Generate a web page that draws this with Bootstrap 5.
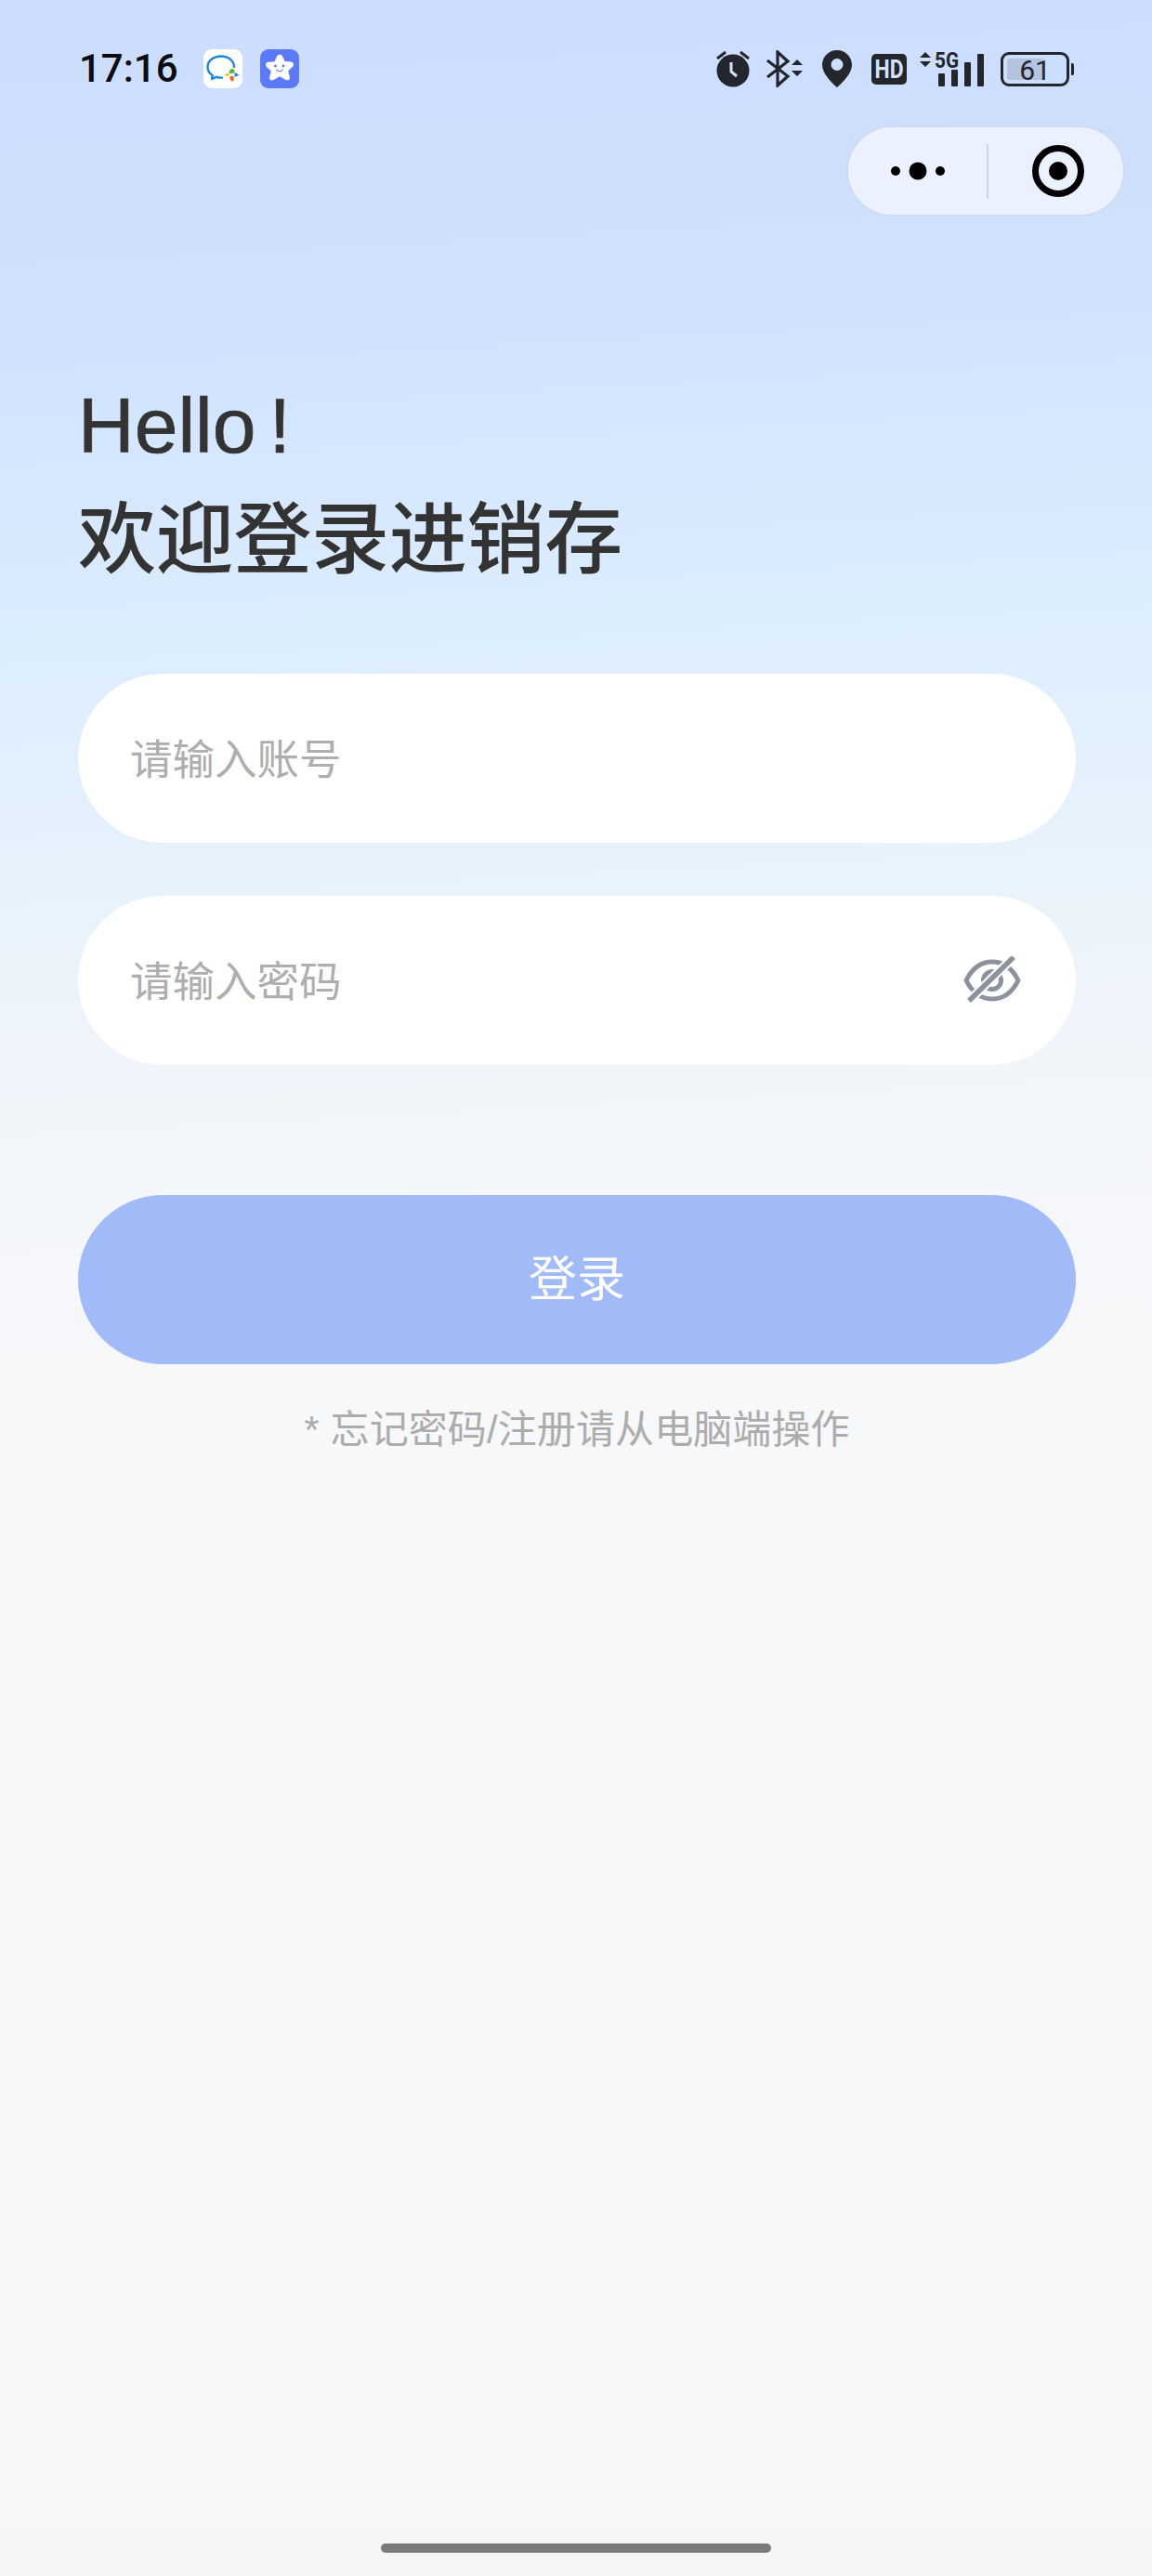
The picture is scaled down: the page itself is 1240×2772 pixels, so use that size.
<!DOCTYPE html>
<html lang="zh-CN">
<head>
  <meta charset="UTF-8">
  <meta name="viewport" content="width=device-width, initial-scale=1.0">
  <title>登录</title>
  <link href="https://cdn.jsdelivr.net/npm/bootstrap@5.3.2/dist/css/bootstrap.min.css" rel="stylesheet">
  <style>
    html, body { height: 100%; }
    body {
      min-height: 2772px;
      background: linear-gradient(177deg, #cbdcfe 0, #d0e1fe 350px, #dcedfe 700px, #e9f3fb 1000px, #f3f6fa 1250px, #f7f8fa 1500px);
      font-family: "Liberation Sans", "Noto Sans CJK SC", sans-serif;
    }
    .status-row { height: 42px; margin-top: 53px; padding: 0 84px 0 85px; }
    .status-time { font: 500 42px/42px Roboto, sans-serif; color: #0b0c10; width: 134px; }
    .app-ico { width: 42px; height: 42px; margin-right: 19px; }
    .ico-bt { margin-left: 17px; }
    .ico-pin { margin-left: 19px; }
    .ico-hd { margin-left: 15px; margin-right: -6px; }
    .ico-sig { margin-left: 14px; }
    .batt-wrap { margin-left: 17px; }
    .batt-body {
      width: 74px; height: 37px; padding: 4px;
      border: 3px solid #23262d; border-radius: 9px;
    }
    .batt-fill {
      height: 100%;
      background: linear-gradient(90deg, #b4c3de 0, #b4c3de 65%, transparent 65%);
      border-radius: 3px;
      font: 400 30px/25px Roboto, sans-serif; color: #23262d;
    }
    .batt-nub { width: 3px; height: 13px; margin-left: 2px; background: #23262d; border-radius: 0 2px 2px 0; }
    .capsule-row { margin-top: 40px; padding-right: 29px; }
    .capsule {
      width: 300px; height: 98px;
      background: #ebf1fe; border: 2px solid #d2dbec;
      border-radius: 49px;
    }
    .capsule-dots { width: 149px; }
    .capsule-line { width: 2px; height: 59px; background: #cfd5df; }
    .capsule-target { padding-left: 5px; }
    .login-wrap { padding: 165px 82px 0 84px; }
    .login-title { font-size: 84px; line-height: 120px; font-weight: 500; color: #333; margin: 0 0 84px; }
    .title-hi { display: block; -webkit-text-stroke: .7px #333; }
    .title-hi span { margin-left: 14px; }
    .title-zh { display: block; margin-top: 3px; letter-spacing: -.3px; }
    .field-box { height: 182px; padding: 0 59px 0 56px; background: #fff; margin-bottom: 57px; }
    .field-box .form-control {
      border: 0; padding: 5px 0 0; background: transparent; box-shadow: none;
      font-size: 45.5px; color: #333; height: 76px;
    }
    .field-box .form-control::placeholder { color: #aeaeae; }
    .login-btn {
      --bs-btn-bg: #a0bbf8; --bs-btn-border-color: #a0bbf8; --bs-btn-color: #fff;
      height: 182px; margin-top: 83px; font-size: 52px;
    }
    .login-hint { margin-top: 41px; font-size: 42px; line-height: 60px; color: #acacac; letter-spacing: .1px; }
    .nav-strip { height: 56px; background: #f6f6f6; }
    .nav-handle { width: 420px; height: 10px; margin-top: 21px; background: #7b7b7b; border-radius: 5px; }
  </style>
</head>
<body class="d-flex flex-column">
  <!-- status bar -->
  <div class="status-row d-flex align-items-center">
    <span class="status-time">17:16</span>
    <svg class="app-ico" viewBox="0 0 42 42">
      <rect width="42" height="42" rx="9" fill="#fff"/>
      <path d="M33 19C33 12.500 27 7.500 19 7.500S4.500 12.500 4.500 19c0 3.800 2 7 5.200 9l-.7 4 4.800-2.200c2 .6 4 .9 6.200.8" fill="none" stroke="#1c86dc" stroke-width="2.400" stroke-linecap="round" stroke-linejoin="round"/>
      <path d="M28 26.500c-1-2 .5-5.500 3-5.500s3 3 2 4.500z" fill="#5fb42e"/>
      <path d="M28 27.500c-1-2-3.500-1.500-5 0 1.500 1.800 4 1.800 5 0z" fill="#f3b01c"/>
      <path d="M29 29c-1.500 1-.5 5 2.500 5.500 2-1 1.500-4 .5-5.500z" fill="#ea6a20"/>
      <path d="M33.500 25l5 2.500-5 2.500z" fill="#1c86dc"/>
    </svg>
    <svg class="app-ico" viewBox="0 0 42 42">
      <rect width="42" height="42" rx="9" fill="#5c79f8"/>
      <path d="M21 5.500c1.800 0 2.800 1.200 3.400 2.800l2 4.700 6.600.6c3 .3 4 3.200 2 5.200l-4.800 4.400 1.600 6.400c.7 2.800-1.700 4.700-4.100 3.300L21 29.300l-6.700 3.800c-2.400 1.400-4.800-.5-4.100-3.300l1.600-6.400L7 19c-2-2-1-4.900 2-5.200l6.600-.6 2-4.700c.6-1.600 1.600-2.800 3.400-2.800z" fill="#fff"/>
      <circle cx="16.500" cy="18" r="1.400" fill="#5c79f8"/>
      <circle cx="25" cy="18" r="1.400" fill="#5c79f8"/>
      <path d="M17.500 22c1.800 2.400 5 2.400 6.800 0" fill="none" stroke="#5c79f8" stroke-width="1.200" stroke-linecap="round"/>
    </svg>
    <svg class="ms-auto" width="38" height="40" viewBox="0 0 38 40">
      <circle cx="19" cy="22" r="17.500" fill="#23262d"/>
      <path d="M2 9l9-7M36 9l-9-7" stroke="#23262d" stroke-width="3" fill="none"/>
      <path d="M17 13v10l6 5" stroke="#d3e1fd" stroke-width="3" fill="none"/>
    </svg>
    <svg class="ico-bt" width="41" height="40" viewBox="0 0 41 40">
      <path d="M1 11l22 17-11 10V2l11 10L1 29" fill="none" stroke="#23262d" stroke-width="3.200"/>
      <path d="M27 16l6-6 6 6zM27 22l6 6 6-6z" fill="#23262d" transform="translate(0 0)"/>
    </svg>
    <svg class="ico-pin" width="32" height="40" viewBox="0 0 32 40">
      <path fill-rule="evenodd" fill="#23262d" d="M16 0C7 0 0 7 0 16c0 11 16 24 16 24s16-13 16-24C32 7 25 0 16 0zm0 9a6.500 6.500 0 1 1 0 13 6.500 6.500 0 0 1 0-13z"/>
    </svg>
    <svg class="ico-hd" width="50" height="49" viewBox="-6 -8 50 49">
      <rect width="38" height="33" rx="5" fill="#23262d"/>
      <text x="19" y="26" text-anchor="middle" font-family="Roboto, sans-serif" font-weight="700" font-size="27" textLength="31" lengthAdjust="spacingAndGlyphs" fill="#d3e1fd">HD</text>
    </svg>
    <svg class="ico-sig" width="70" height="50" viewBox="0 -6 70 50">
      <path d="M0 7l6-6 6 6zM0 11l6 6 6-6z" fill="#23262d"/>
      <text x="16" y="18" font-family="Roboto, sans-serif" font-weight="700" font-size="24" textLength="26" lengthAdjust="spacingAndGlyphs" fill="#23262d">5G</text>
      <rect x="20" y="24" width="7" height="14" rx="1" fill="#23262d"/>
      <rect x="34" y="20" width="7" height="18" rx="1" fill="#23262d"/>
      <rect x="48" y="12" width="7" height="26" rx="1" fill="#23262d"/>
      <rect x="62" y="3" width="7" height="35" rx="1" fill="#23262d"/>
    </svg>
    <div class="batt-wrap d-flex align-items-center">
      <div class="batt-body"><div class="batt-fill text-center">61</div></div>
      <div class="batt-nub"></div>
    </div>
  </div>

  <!-- mini program capsule -->
  <div class="capsule-row d-flex justify-content-end">
    <div class="capsule d-flex align-items-center">
      <div class="capsule-dots d-flex justify-content-center">
        <svg width="60" height="20" viewBox="0 0 60 20">
          <circle cx="6" cy="10" r="5" fill="#000"/>
          <circle cx="30" cy="10" r="9.500" fill="#000"/>
          <circle cx="54" cy="10" r="5" fill="#000"/>
        </svg>
      </div>
      <div class="capsule-line"></div>
      <div class="capsule-target flex-fill d-flex justify-content-center">
        <svg width="56" height="56" viewBox="0 0 56 56">
          <circle cx="28" cy="28" r="24.500" fill="none" stroke="#000" stroke-width="7"/>
          <circle cx="28" cy="28" r="10" fill="#000"/>
        </svg>
      </div>
    </div>
  </div>

  <main class="login-wrap">
    <h1 class="login-title"><span class="title-hi">Hello<span>!</span></span><span class="title-zh">欢迎登录进销存</span></h1>
    <form>
      <div class="field-box rounded-pill d-flex align-items-center">
        <input type="text" class="form-control" placeholder="请输入账号">
      </div>
      <div class="field-box rounded-pill d-flex align-items-center">
        <input type="password" class="form-control" placeholder="请输入密码">
        <svg class="flex-shrink-0" width="62" height="52" viewBox="0 0 62 52">
          <path d="M3 26C10 12 20 6 31 6s21 6 28 20c-7 14-17 20-28 20S10 40 3 26z" fill="none" stroke="#8b929c" stroke-width="5" stroke-linejoin="round"/>
          <circle cx="31" cy="26" r="9.500" fill="none" stroke="#8b929c" stroke-width="5"/>
          <path d="M54 1L6 48" stroke="#fff" stroke-width="10"/>
          <path d="M54 1L6 48" stroke="#8b929c" stroke-width="5.500"/>
        </svg>
      </div>
      <button type="button" class="login-btn btn rounded-pill w-100">登录</button>
    </form>
    <p class="login-hint text-center mb-0">* 忘记密码/注册请从电脑端操作</p>
  </main>

  <!-- android gesture bar -->
  <div class="nav-strip mt-auto d-flex justify-content-center">
    <div class="nav-handle"></div>
  </div>

  <script src="https://cdn.jsdelivr.net/npm/bootstrap@5.3.2/dist/js/bootstrap.bundle.min.js"></script>
</body>
</html>
